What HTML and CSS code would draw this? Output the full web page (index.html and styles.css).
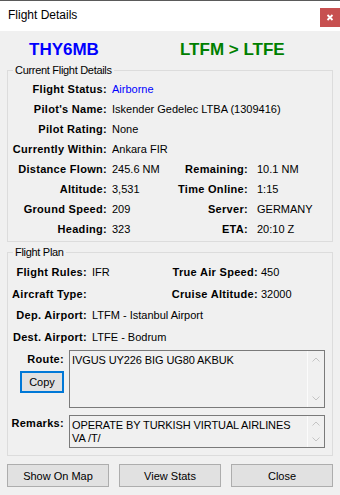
FILE: index.html
```html
<!DOCTYPE html>
<html>
<head>
<meta charset="utf-8">
<link rel="stylesheet" href="styles.css">
</head>
<body>
<div class="window">
  <div class="titlebar">
    <span class="title">Flight Details</span>
    <div class="close"><svg width="20" height="19" viewBox="0 0 20 19"><path d="M7.5 7 L12.5 12 M12.5 7 L7.5 12" stroke="#fff" stroke-width="1.8" fill="none"/></svg></div>
  </div>
  <div class="body">
    <div class="header">
      <span class="callsign">THY6MB</span>
      <span class="legs">LTFM &gt; LTFE</span>
    </div>

    <fieldset class="group group-current">
      <legend>Current Flight Details</legend>
      <div class="grid grid-current">
        <div class="lbl">Flight Status:</div><div class="val wide status">Airborne</div>
        <div class="lbl">Pilot's Name:</div><div class="val wide">Iskender Gedelec LTBA (1309416)</div>
        <div class="lbl">Pilot Rating:</div><div class="val wide">None</div>
        <div class="lbl">Currently Within:</div><div class="val wide">Ankara FIR</div>
        <div class="lbl">Distance Flown:</div><div class="val">245.6 NM</div><div class="lbl">Remaining:</div><div class="val val-r">10.1 NM</div>
        <div class="lbl">Altitude:</div><div class="val">3,531</div><div class="lbl">Time Online:</div><div class="val val-r">1:15</div>
        <div class="lbl">Ground Speed:</div><div class="val">209</div><div class="lbl">Server:</div><div class="val val-r">GERMANY</div>
        <div class="lbl">Heading:</div><div class="val">323</div><div class="lbl">ETA:</div><div class="val val-r">20:10 Z</div>
      </div>
    </fieldset>

    <fieldset class="group group-plan">
      <legend>Flight Plan</legend>
      <div class="grid grid-plan">
        <div class="lbl">Flight Rules:</div><div class="val">IFR</div><div class="lbl">True Air Speed:</div><div class="val val-p">450</div>
        <div class="lbl">Aircraft Type:</div><div class="val"></div><div class="lbl">Cruise Altitude:</div><div class="val val-p">32000</div>
        <div class="lbl">Dep. Airport:</div><div class="val wide">LTFM - Istanbul Airport</div>
        <div class="lbl">Dest. Airport:</div><div class="val wide">LTFE - Bodrum</div>
      </div>

      <div class="field field-route">
        <div class="side">
          <div class="side-label">Route:</div>
          <button class="copy">Copy</button>
        </div>
        <div class="textbox textbox-route">
          <div class="text">IVGUS UY226 BIG UG80 AKBUK</div>
          <div class="scroll">
            <svg width="16" height="17" viewBox="0 0 16 17"><polyline points="4.5,10.5 8,7 11.5,10.5" stroke="#c4c4c4" stroke-width="1" fill="none"/></svg>
            <svg width="16" height="17" viewBox="0 0 16 17"><polyline points="4.5,6.5 8,10 11.5,6.5" stroke="#c4c4c4" stroke-width="1" fill="none"/></svg>
          </div>
        </div>
      </div>

      <div class="field field-remarks">
        <div class="side">
          <div class="side-label remarks-label">Remarks:</div>
        </div>
        <div class="textbox textbox-remarks">
          <div class="text">OPERATE BY TURKISH VIRTUAL AIRLINES<br>VA /T/</div>
          <div class="scroll">
            <svg width="16" height="14" viewBox="0 0 16 14"><polyline points="4.5,9.5 8,6 11.5,9.5" stroke="#c4c4c4" stroke-width="1" fill="none"/></svg>
            <svg width="16" height="14" viewBox="0 0 16 14"><polyline points="4.5,4.5 8,8 11.5,4.5" stroke="#c4c4c4" stroke-width="1" fill="none"/></svg>
          </div>
        </div>
      </div>
    </fieldset>

    <div class="buttons">
      <button class="btn">Show On Map</button>
      <button class="btn">View Stats</button>
      <button class="btn">Close</button>
    </div>
  </div>
</div>
</body>
</html>
```

FILE: styles.css
```css
* { box-sizing: border-box; }

body {
  margin: 0;
  background: #f0f0f0;
  font-family: "Liberation Sans", Arial, sans-serif;
  font-size: 11px;
  color: #000;
}

.window {
  width: 340px;
  height: 495px;
  overflow: hidden;
  background: #f0f0f0;
}

.titlebar {
  height: 31px;
  border-top: 1px solid #5a5a5a;
  background: #fff;
  display: flex;
  align-items: flex-start;
  padding-left: 8px;
}

.title {
  font-size: 12px;
  line-height: 29px;
}

.close {
  margin-left: auto;
  margin-top: 7px;
  width: 20px;
  height: 19px;
  background: #c75050;
  display: flex;
}

.body {
  padding: 10px 7px 0;
}

.header {
  display: grid;
  grid-template-columns: 151px auto;
  padding-left: 22px;
  font-size: 17px;
  line-height: 17px;
  font-weight: bold;
}

.callsign { color: #0000ff; }
.legs { color: #008000; }

.group {
  margin: 5px 0 0;
  padding: 1px 0 2px;
  border: 1px solid #dcdcdc;
  min-width: 0;
}

.group legend {
  margin-left: 5px;
  padding: 0 2px;
  font-size: 11px;
  line-height: 15px;
  letter-spacing: -0.3px;
}

.group-plan {
  margin-top: 3px;
  padding-bottom: 7px;
}

.grid {
  display: grid;
  align-items: center;
  line-height: 14px;
}

.grid-current {
  grid-template-columns: 99px 69px 72px 1fr;
  grid-auto-rows: 20px;
}

.grid-plan {
  grid-template-columns: 79px 73px 98px 1fr;
  grid-template-rows: 22px 21px 22px 21px;
}

.lbl {
  font-weight: bold;
  text-align: right;
  letter-spacing: 0.3px;
  white-space: nowrap;
}

.val {
  padding-left: 5px;
  white-space: nowrap;
}

.wide { grid-column: 2 / -1; }
.val-r { padding-left: 9px; }
.val-p { padding-left: 3px; }
.status { color: #0000ff; }

.field {
  display: flex;
}

.field-route { margin-top: 3px; }
.field-remarks { margin-top: 7px; }

.side {
  width: 61px;
  display: flex;
  flex-direction: column;
}

.side-label {
  font-weight: bold;
  text-align: right;
  padding-right: 5px;
  letter-spacing: 0.3px;
  line-height: 18px;
}

.remarks-label { line-height: 16px; }

.copy {
  margin: 3px 0 0 12px;
  width: 44px;
  height: 22px;
  padding: 0;
  border: 2px solid #0078d7;
  background: #e1e1e1;
  font-family: inherit;
  font-size: 11px;
  color: #000;
}

.textbox {
  flex: 1;
  margin-right: 7px;
  border: 1px solid #7a7a7a;
  background: #f0f0f0;
  display: flex;
}

.textbox-route { height: 58px; }
.textbox-remarks { height: 33px; }

.text {
  flex: 1;
  padding: 3px 0 0 2px;
  line-height: 13px;
  letter-spacing: -0.1px;
}

.scroll {
  width: 17px;
  border-left: 1px solid #fbfbfb;
  display: flex;
  flex-direction: column;
  justify-content: space-between;
}

.buttons {
  margin-top: 8px;
  display: flex;
  gap: 10px;
}

.btn {
  flex: 1;
  height: 23px;
  padding: 0;
  border: 1px solid #adadad;
  background: #e1e1e1;
  font-family: inherit;
  font-size: 11px;
  color: #000;
}
```
